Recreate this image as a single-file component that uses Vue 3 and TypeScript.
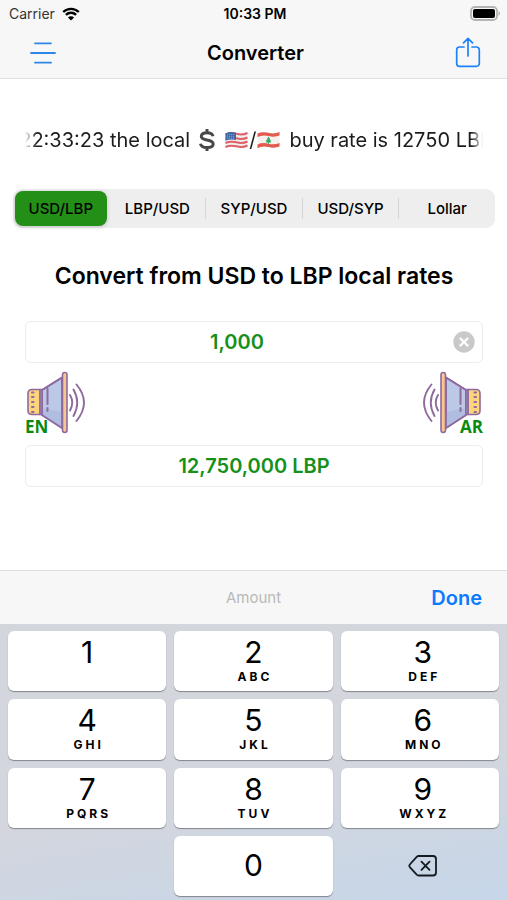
<script setup lang="ts">
import { computed, ref } from 'vue'

interface Pair {
  id: string
  label: string
}

interface Key {
  digit: string
  letters: string
}

const pairs: Pair[] = [
  { id: 'usd-lbp', label: 'USD/LBP' },
  { id: 'lbp-usd', label: 'LBP/USD' },
  { id: 'syp-usd', label: 'SYP/USD' },
  { id: 'usd-syp', label: 'USD/SYP' },
  { id: 'lollar', label: 'Lollar' },
]

const keys: Key[] = [
  { digit: '1', letters: '' },
  { digit: '2', letters: 'ABC' },
  { digit: '3', letters: 'DEF' },
  { digit: '4', letters: 'GHI' },
  { digit: '5', letters: 'JKL' },
  { digit: '6', letters: 'MNO' },
  { digit: '7', letters: 'PQRS' },
  { digit: '8', letters: 'TUV' },
  { digit: '9', letters: 'WXYZ' },
]

const rate = 12750
const selected = ref('usd-lbp')
const amount = ref('1,000')

const amountValue = computed(() => Number(amount.value.replace(/\D/g, '')))
const result = computed(() => `${(amountValue.value * rate).toLocaleString('en-US')} LBP`)

function setAmount(digits: string) {
  amount.value = digits ? Number(digits).toLocaleString('en-US') : ''
}

function press(digit: string) {
  setAmount(amount.value.replace(/\D/g, '') + digit)
}

function backspace() {
  setAmount(amount.value.replace(/\D/g, '').slice(0, -1))
}
</script>

<template>
  <div class="screen">
    <header class="header">
      <div class="status">
        <span class="carrier">
          Carrier
          <svg class="wifi" viewBox="0 0 18 14" aria-hidden="true">
            <path d="M1.2 5A11.2 11.2 0 0 1 16.800 5" />
            <path d="M3.900 7.900A7.200 7.200 0 0 1 14.100 7.900" />
            <path class="solid" d="M9 13.600L5.900 10.500A4.400 4.400 0 0 1 12.100 10.500Z" />
          </svg>
        </span>
        <span class="time">10:33 PM</span>
        <svg class="battery" viewBox="0 0 31 15" aria-hidden="true">
          <rect x="1" y="1" width="26" height="13" rx="4" fill="none" stroke="#b4b4b4" stroke-width="1.800" />
          <rect x="3" y="3" width="22" height="9" rx="2" fill="#000" />
          <path d="M28.500 5.300C30.600 6 30.600 9 28.500 9.700Z" fill="#b4b4b4" />
        </svg>
      </div>
      <nav class="nav">
        <button class="icon-button" type="button" aria-label="Menu">
          <svg width="26" height="24" viewBox="0 0 26 24" fill="none" stroke="#2e87e6" stroke-width="1.800" stroke-linecap="round">
            <path d="M5 2.300H21M1 12H25M5 21.700H21" />
          </svg>
        </button>
        <h1 class="title">Converter</h1>
        <button class="icon-button" type="button" aria-label="Share">
          <svg width="26" height="32" viewBox="0 0 26 32" fill="none" stroke="#1c83fb" stroke-width="1.700" stroke-linecap="round" stroke-linejoin="round">
            <path d="M9 10H4.500A2.800 2.800 0 0 0 1.700 12.800V26.500A2.800 2.800 0 0 0 4.500 29.300H21.500A2.800 2.800 0 0 0 24.300 26.500V12.800A2.800 2.800 0 0 0 21.500 10H17M13 19V1.500M8.500 5.800L13 1.300L17.500 5.800" />
          </svg>
        </button>
      </nav>
    </header>

    <main class="content">
      <div class="ticker">
        <p class="ticker-line">
          <span>22:33:23 the local</span>
          <svg class="dollar" viewBox="0 0 18 24" fill="none" stroke="#45484a" stroke-width="3" aria-hidden="true">
            <path d="M15 8.200C14.500 5.800 12.200 4.700 9 4.700C5.500 4.700 3.300 6 3.300 8.300C3.300 11 6 11.400 9 12C12.300 12.700 15.200 13.300 15.200 16C15.200 18.300 12.700 19.500 9 19.500C5.500 19.500 3 18.300 2.500 15.700M9 1V5M9 19V23" />
          </svg>
          <span class="flags">
            <svg class="flag" viewBox="0 0 24 18" aria-hidden="true">
              <path d="M1 2.500Q6 .2 12 1.800T23 1V15.500Q18 17.500 12 16T1 17Z" fill="#f3eeee" />
              <path d="M1 3.500Q6 1.200 12 2.800T23 2M1 8Q6 5.700 12 7.300T23 6.500M1 12Q6 9.700 12 11.300T23 10.500M1 16Q6 13.700 12 15.300T23 14.500" fill="none" stroke="#dc6268" stroke-width="2" />
              <path d="M1 2.500Q6 .2 11.500 1.700V9Q6 7.600 1 9.800Z" fill="#4265a5" />
              <path d="M2.500 4.300Q6 2.800 10.500 3.800M2.500 6.200Q6 4.700 10.500 5.700M2.500 8Q6 6.500 10.500 7.500" fill="none" stroke="#b8c7df" stroke-width=".8" stroke-dasharray="1 1" />
            </svg>
            <span>/</span>
            <svg class="flag" viewBox="0 0 24 18" aria-hidden="true">
              <path d="M1 2.500Q6 .2 12 1.800T23 1V15.500Q18 17.500 12 16T1 17Z" fill="#f4f1ee" />
              <path d="M1 2.500Q6 .2 12 1.800T23 1V4.500Q18 6.500 12 5T1 6ZM1 13.500Q6 11.200 12 12.700T23 12V15.500Q18 17.500 12 16T1 17Z" fill="#e45a4d" />
              <path d="M12 5.500L13.500 8H13L14.700 10H13.700L15 11.600H12.500V12.700H11.500V11.600H9L10.300 10H9.300L11 8H10.500Z" fill="#36a866" />
            </svg>
          </span>
          <span>buy rate is 12750 LBP</span>
        </p>
      </div>

      <div class="segments" role="radiogroup" aria-label="Currency pair">
        <label v-for="pair in pairs" :key="pair.id" class="segment">
          <input v-model="selected" class="segment-input" type="radio" name="pair" :value="pair.id" />
          <span class="segment-label">{{ pair.label }}</span>
        </label>
      </div>

      <h2 class="heading">Convert from USD to LBP local rates</h2>

      <div class="field">
        <input v-model="amount" class="field-input" type="text" inputmode="numeric" aria-label="Amount in USD" />
        <button class="clear" type="button" aria-label="Clear amount" @click="amount = ''">
          <svg width="22" height="22" viewBox="0 0 22 22" aria-hidden="true">
            <circle cx="11" cy="11" r="10.700" fill="#c9c9c9" />
            <path d="M7.500 7.500L14.500 14.500M14.500 7.500L7.500 14.500" stroke="#fff" stroke-width="2.400" stroke-linecap="round" />
          </svg>
        </button>
      </div>

      <div class="speakers">
        <button v-for="lang in ['EN', 'AR']" :key="lang" class="speaker" :class="{ mirrored: lang === 'AR' }" type="button">
          <svg class="speaker-icon" viewBox="0 0 62 64" fill="none" stroke="#8e6a9f" stroke-width="1.600" stroke-linecap="round" stroke-linejoin="round" aria-hidden="true">
            <path d="M17 19L37 6.500V57L17 44Z" fill="#bcc9e6" />
            <path d="M17 37L37 41V57L17 44Z" fill="#b0bde1" stroke="none" />
            <path d="M17 19L37 6.500V57L17 44Z" />
            <path d="M15 18.500H7Q3 18.500 3 22.500V39.500Q3 43.500 7 43.500H15Z" fill="#fbd47c" />
            <path d="M15 18.500H17V43.500H15Z" fill="#a2a9cf" />
            <path d="M7 21.500H8.500M7 26H8.500M7 31H8.500M7 36H8.500M7 41H8.500" stroke-width="2" />
            <path d="M22.500 17.500V33M22.500 37V40" stroke-width="2" />
            <rect x="37.500" y="1.500" width="4.500" height="60" rx="2.200" fill="#f8c78f" />
            <path d="M45 24Q49.500 31.500 45 39.500M48.500 18.500Q56 31.500 48.500 45M51.500 13.500Q66.500 31.500 51.500 50" stroke-width="1.900" />
          </svg>
          <span class="speaker-lang">{{ lang }}</span>
        </button>
      </div>

      <div class="field">
        <input class="field-input" type="text" readonly :value="result" aria-label="Amount in LBP" />
      </div>
    </main>

    <section class="input-panel" aria-label="Number pad">
      <div class="toolbar">
        <span class="toolbar-title">Amount</span>
        <button class="done" type="button">Done</button>
      </div>
      <div class="keypad">
        <button v-for="key in keys" :key="key.digit" class="key" type="button" @click="press(key.digit)">
          <span class="digit">{{ key.digit }}</span>
          <span class="letters">{{ key.letters }}</span>
        </button>
        <button class="key zero" type="button" @click="press('0')">
          <span class="digit">0</span>
        </button>
        <button class="delete" type="button" aria-label="Delete" @click="backspace">
          <svg width="30" height="24" viewBox="0 0 30 24" fill="none" stroke="#151a20" stroke-width="1.800" stroke-linecap="round" stroke-linejoin="round">
            <path d="M10.500 2H25Q28 2 28 5V18.500Q28 21.500 25 21.500H10.500Q9.600 21.500 8.700 20.600L1.800 13.100Q.9 11.800 1.800 10.500L8.700 2.900Q9.600 2 10.500 2ZM13.500 7.700L21.500 15.900M21.500 7.700L13.500 15.900" />
          </svg>
        </button>
      </div>
    </section>
  </div>
</template>

<style>
body {
  margin: 0;
  background: #fff;
}
</style>

<style scoped>
.screen {
  box-sizing: border-box;
  display: flex;
  flex-direction: column;
  min-height: 100vh;
  color: #000;
  font-family: Inter, "Liberation Sans", sans-serif;
}

button {
  padding: 0;
  border: 0;
  background: none;
  color: inherit;
  font: inherit;
  cursor: pointer;
}

svg {
  display: block;
}

.header {
  border-bottom: 1px solid #dedede;
  background: #f7f7f7;
}

.status {
  display: grid;
  grid-template-columns: 1fr auto 1fr;
  align-items: center;
  height: 27px;
  padding: 0 6px 0 9px;
  font-size: 14px;
}

.carrier {
  display: flex;
  align-items: center;
  gap: 7px;
  color: #333;
}

.wifi {
  width: 18px;
  height: 14px;
  fill: none;
  stroke: #000;
  stroke-width: 2.400;
}

.wifi .solid {
  fill: #000;
  stroke: none;
}

.time {
  font-weight: 600;
}

.battery {
  justify-self: end;
  width: 31px;
  height: 15px;
}

.nav {
  display: flex;
  align-items: center;
  justify-content: space-between;
  height: 51px;
  padding: 0 26px 0 30px;
}

.icon-button {
  display: grid;
  place-items: center;
}

.title {
  margin: 0;
  font-size: 20px;
  font-weight: 600;
}

.content {
  display: flex;
  flex: 1;
  flex-direction: column;
  padding: 0 24px 0 25px;
}

.ticker {
  display: flex;
  justify-content: center;
  margin-top: 46px;
  overflow: hidden;
  mask-image: linear-gradient(90deg, transparent, #000 12px, #000 calc(100% - 12px), transparent);
}

.ticker-line {
  display: flex;
  flex: none;
  align-items: center;
  gap: 8px;
  margin: 0;
  padding-left: 4px;
  color: #1c1c1c;
  font-size: 20px;
  line-height: 30px;
  white-space: nowrap;
}

.dollar {
  width: 18px;
  height: 24px;
}

.flags {
  display: flex;
  align-items: center;
}

.flag {
  width: 25px;
  height: 18px;
}

.segments {
  display: flex;
  gap: 5px;
  margin: 34px -12px 0;
  padding: 2px;
  border-radius: 9px;
  background: #eee;
}

.segment {
  position: relative;
  display: flex;
  flex: 1;
  height: 35px;
}

.segment + .segment + .segment::before {
  position: absolute;
  top: 7px;
  left: -3px;
  width: 1px;
  height: 21px;
  background: #d6d6d6;
  content: "";
}

.segment-input {
  position: absolute;
  inset: 0;
  margin: 0;
  opacity: 0;
}

.segment-label {
  display: grid;
  flex: 1;
  place-items: center;
  border-radius: 8px;
  font-size: 15px;
  font-weight: 500;
}

.segment-input:checked + .segment-label {
  background: #248f17;
  box-shadow: 0 1px 4px #0003;
}

.heading {
  margin: 33px 0 0;
  font-size: 23px;
  font-weight: 600;
  line-height: 30px;
  text-align: center;
}

.field {
  display: flex;
  align-items: center;
  border: 1px solid #ececec;
  border-radius: 6px;
}

.heading + .field {
  margin-top: 30px;
}

.field-input {
  box-sizing: border-box;
  flex: 1;
  min-width: 0;
  height: 40px;
  padding: 0 4px;
  border: 0;
  outline: 0;
  background: none;
  color: #16901a;
  font: 600 20px Inter, "Liberation Sans", sans-serif;
  text-align: center;
}

.clear {
  margin: 0 7px 0 5px;
}

.speakers {
  display: flex;
  justify-content: space-between;
  margin: 8px 0 10px;
}

.speaker {
  position: relative;
}

.speaker-icon {
  width: 62px;
  height: 64px;
}

.mirrored .speaker-icon {
  transform: scaleX(-1);
}

.speaker-lang {
  position: absolute;
  bottom: 0;
  left: 0;
  color: #0b8a12;
  font-family: "Open Sans", "Noto Sans", sans-serif;
  font-size: 17px;
  font-weight: 700;
  line-height: 16px;
}

.mirrored .speaker-lang {
  right: 0;
  left: auto;
}

.toolbar {
  display: grid;
  grid-template-columns: 1fr auto 1fr;
  align-items: center;
  height: 53px;
  padding: 0 25px;
  border-top: 1px solid #dedede;
  background: #f7f7f7;
}

.toolbar-title {
  grid-column: 2;
  color: #b9b9b9;
  font-size: 15px;
}

.done {
  justify-self: end;
  color: #0a7aff;
  font-size: 20px;
  font-weight: 600;
}

.keypad {
  box-sizing: border-box;
  display: grid;
  grid-template-rows: repeat(4, 1fr);
  grid-template-columns: repeat(3, 1fr);
  gap: 8px;
  height: 276px;
  padding: 7px 8px 4px;
  background: linear-gradient(170deg, #d4d6de 0%, #d4d6dd 55%, #c6d6e9 100%);
}

.key {
  display: flex;
  flex-direction: column;
  align-items: center;
  justify-content: flex-start;
  padding-top: 4px;
  border-radius: 6px;
  background: #fff;
  box-shadow: 0 1px 1px #83868d;
}

.key:nth-child(3n),
.delete {
  padding-left: 6px;
}

.digit {
  font-size: 30px;
  line-height: 35px;
}

.letters {
  padding-left: 3px;
  font-size: 12px;
  font-weight: 700;
  letter-spacing: 3px;
  line-height: 14px;
}

.zero {
  grid-column: 2;
  justify-content: center;
  padding-top: 0;
}

.delete {
  display: grid;
  place-items: center;
}
</style>
